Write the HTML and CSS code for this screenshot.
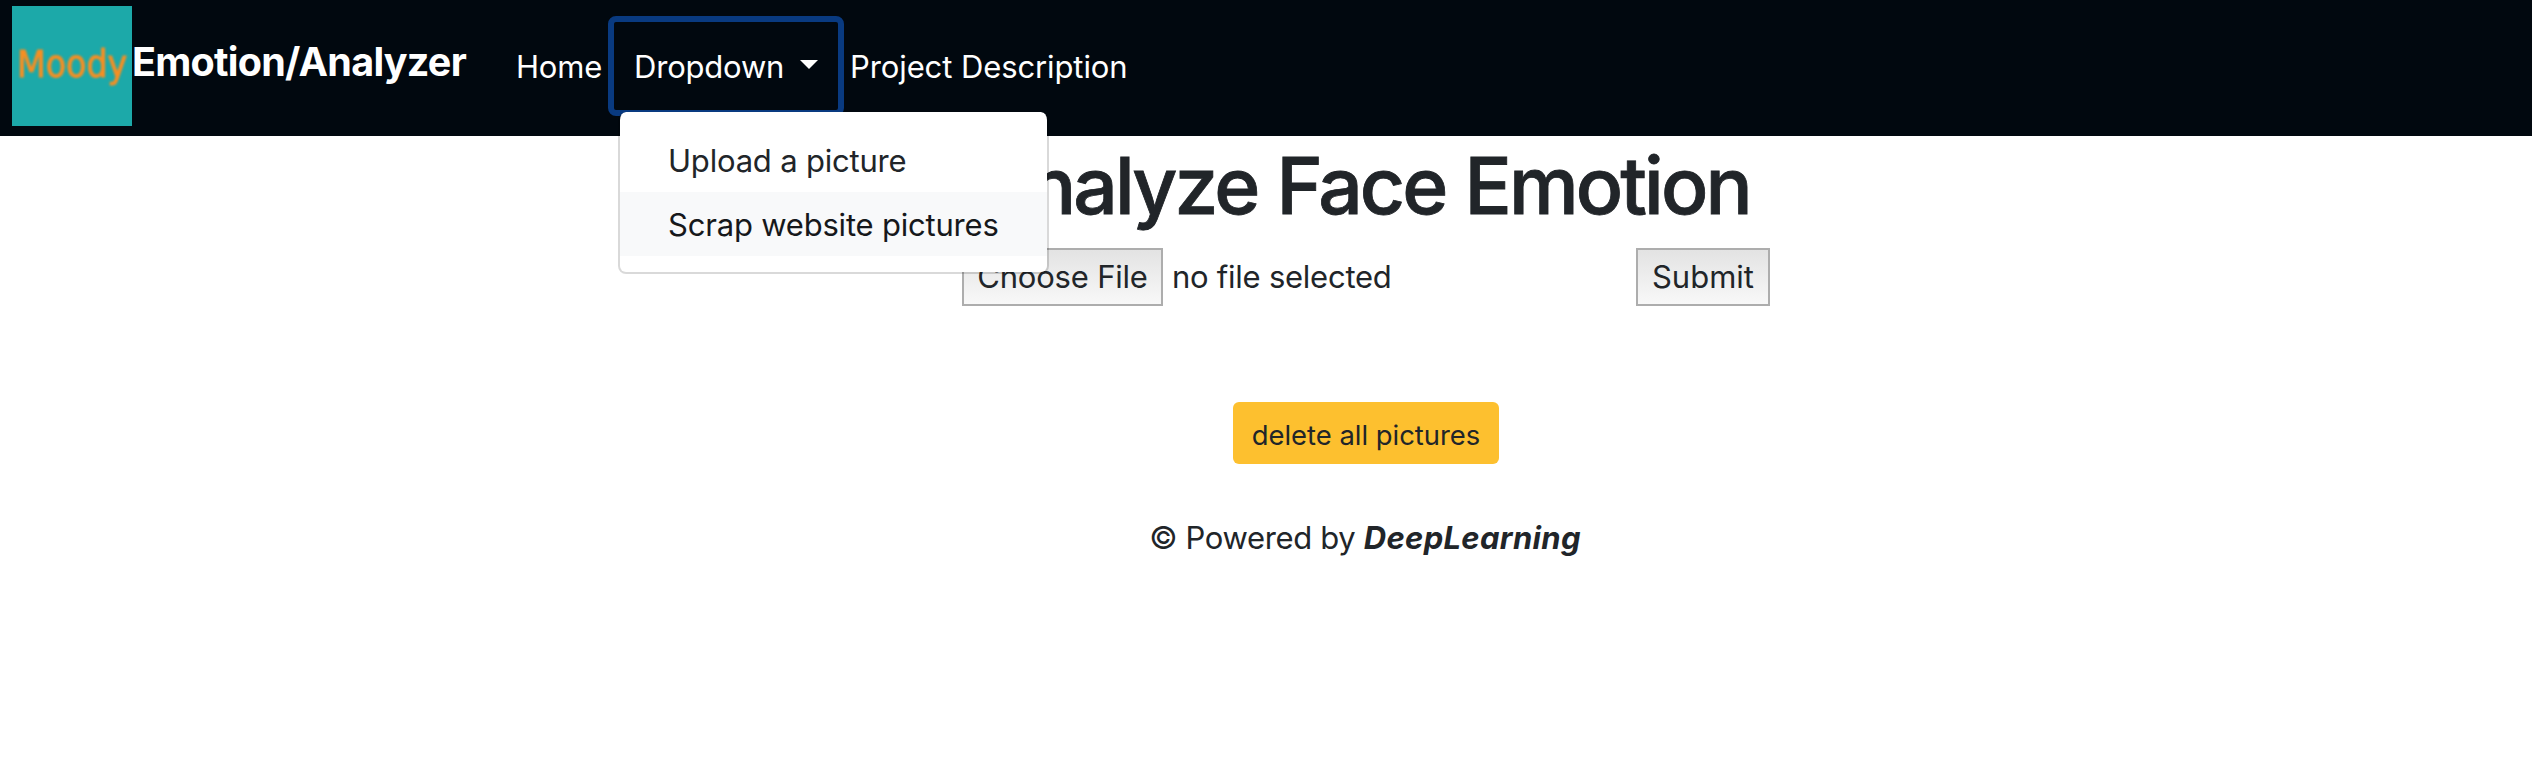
FILE: index.html
```
<!DOCTYPE html>
<html lang="en">
<head>
<meta charset="utf-8">
<title>Emotion/Analyzer</title>
<link rel="stylesheet" href="styles.css">
</head>
<body>
<nav class="navbar">
  <a class="brand"><span class="logo"><span class="logo-text">Moody</span></span><span class="brand-name">Emotion/Analyzer</span></a>
  <a class="nav-link home">Home</a>
  <div class="dropdown">
    <button class="toggle">Dropdown<span class="caret"></span></button>
    <div class="menu">
      <a class="item">Upload a picture</a>
      <a class="item active">Scrap website pictures</a>
    </div>
  </div>
  <a class="nav-link project">Project Description</a>
</nav>
<main class="content">
  <h1 class="title">Analyze Face Emotion</h1>
  <form class="upload-form">
    <button type="button" class="control choose">Choose File</button>
    <span class="status">no file selected</span>
    <button type="button" class="control submit">Submit</button>
  </form>
  <button class="delete">delete all pictures</button>
  <footer class="footer"><span class="powered">© Powered by</span> <span class="deep">DeepLearning</span></footer>
</main>
</body>
</html>
```
FILE: styles.css
```
* { box-sizing: border-box; }
body { margin: 0; background: #fff; color: #212529; font-family: Inter, "Liberation Sans", sans-serif; font-size: 31px; line-height: 48px; letter-spacing: -0.2px; }
button { font: inherit; color: inherit; letter-spacing: inherit; margin: 0; }
.navbar { display: flex; align-items: flex-start; height: 136px; padding: 6px 12px; background: #01080f; color: #fff; }
.brand { display: flex; width: 504px; }
.logo { width: 120px; height: 120px; background: #1ca9a9; color: #f78f22; font-family: "DejaVu Sans Condensed", "DejaVu Sans", sans-serif; font-stretch: condensed; font-size: 37px; padding: 35px 0 0 5px; letter-spacing: 0; }
.logo-text { display: block; filter: blur(0.8px); -webkit-text-stroke: 0.9px #f78f22; }
.brand-name { font-size: 39.5px; font-weight: 700; line-height: 60px; padding-top: 26px; letter-spacing: -0.75px; }
.nav-link { padding-top: 37px; }
.home { width: 92px; }
.dropdown { position: relative; width: 236px; height: 100px; margin-top: 10px; }
.toggle { display: flex; align-items: center; width: 236px; height: 100px; padding: 2px 0 0 20px; border: 6px solid #093a80; border-radius: 8px; background: #01080f; color: #fff; }
.caret { margin: -6px 0 0 16px; border: 9px solid transparent; border-top-color: #fff; border-bottom: 0; }
.menu { position: absolute; left: 10px; top: 96px; width: 431px; padding: 16px 0; background: #fff; background-clip: padding-box; border: 2px solid rgba(0,0,0,.15); border-top: 0; border-radius: 8px; color: #212529; }
.item { display: block; height: 64px; padding: 9px 0 0 48px; }
.active { background: #f8f9fa; color: #16181b; }
.project { margin-left: 6px; letter-spacing: -0.1px; }
.content { display: flex; flex-direction: column; align-items: center; width: 2532px; padding: 0 0 0 200px; }
.title { margin: 0 6px 0 0; padding-top: 2px; height: 112px; font-size: 78.5px; font-weight: 500; line-height: 96px; letter-spacing: -2.9px; word-spacing: 1px; -webkit-text-stroke: 0.8px #212529; }
.upload-form { display: flex; width: 808px; height: 58px; }
.control { height: 58px; border: 2px solid #adadad; background: linear-gradient(#e3e3e3, #f8f8f8); padding: 0; }
.choose { width: 201px; }
.status { padding: 5px 0 0 9px; flex: 1; letter-spacing: -0.25px; }
.submit { width: 134px; letter-spacing: 0; }
.delete { width: 266px; height: 62px; margin-top: 96px; padding: 3px 0 0; border: 0; border-radius: 6px; background: #fdc02f; font-size: 27.4px; letter-spacing: 0; }
.footer { margin: 50px 2px 0 0; }
.powered { letter-spacing: -0.35px; }
.deep { font-weight: 700; font-style: italic; letter-spacing: 0.3px; }
```
